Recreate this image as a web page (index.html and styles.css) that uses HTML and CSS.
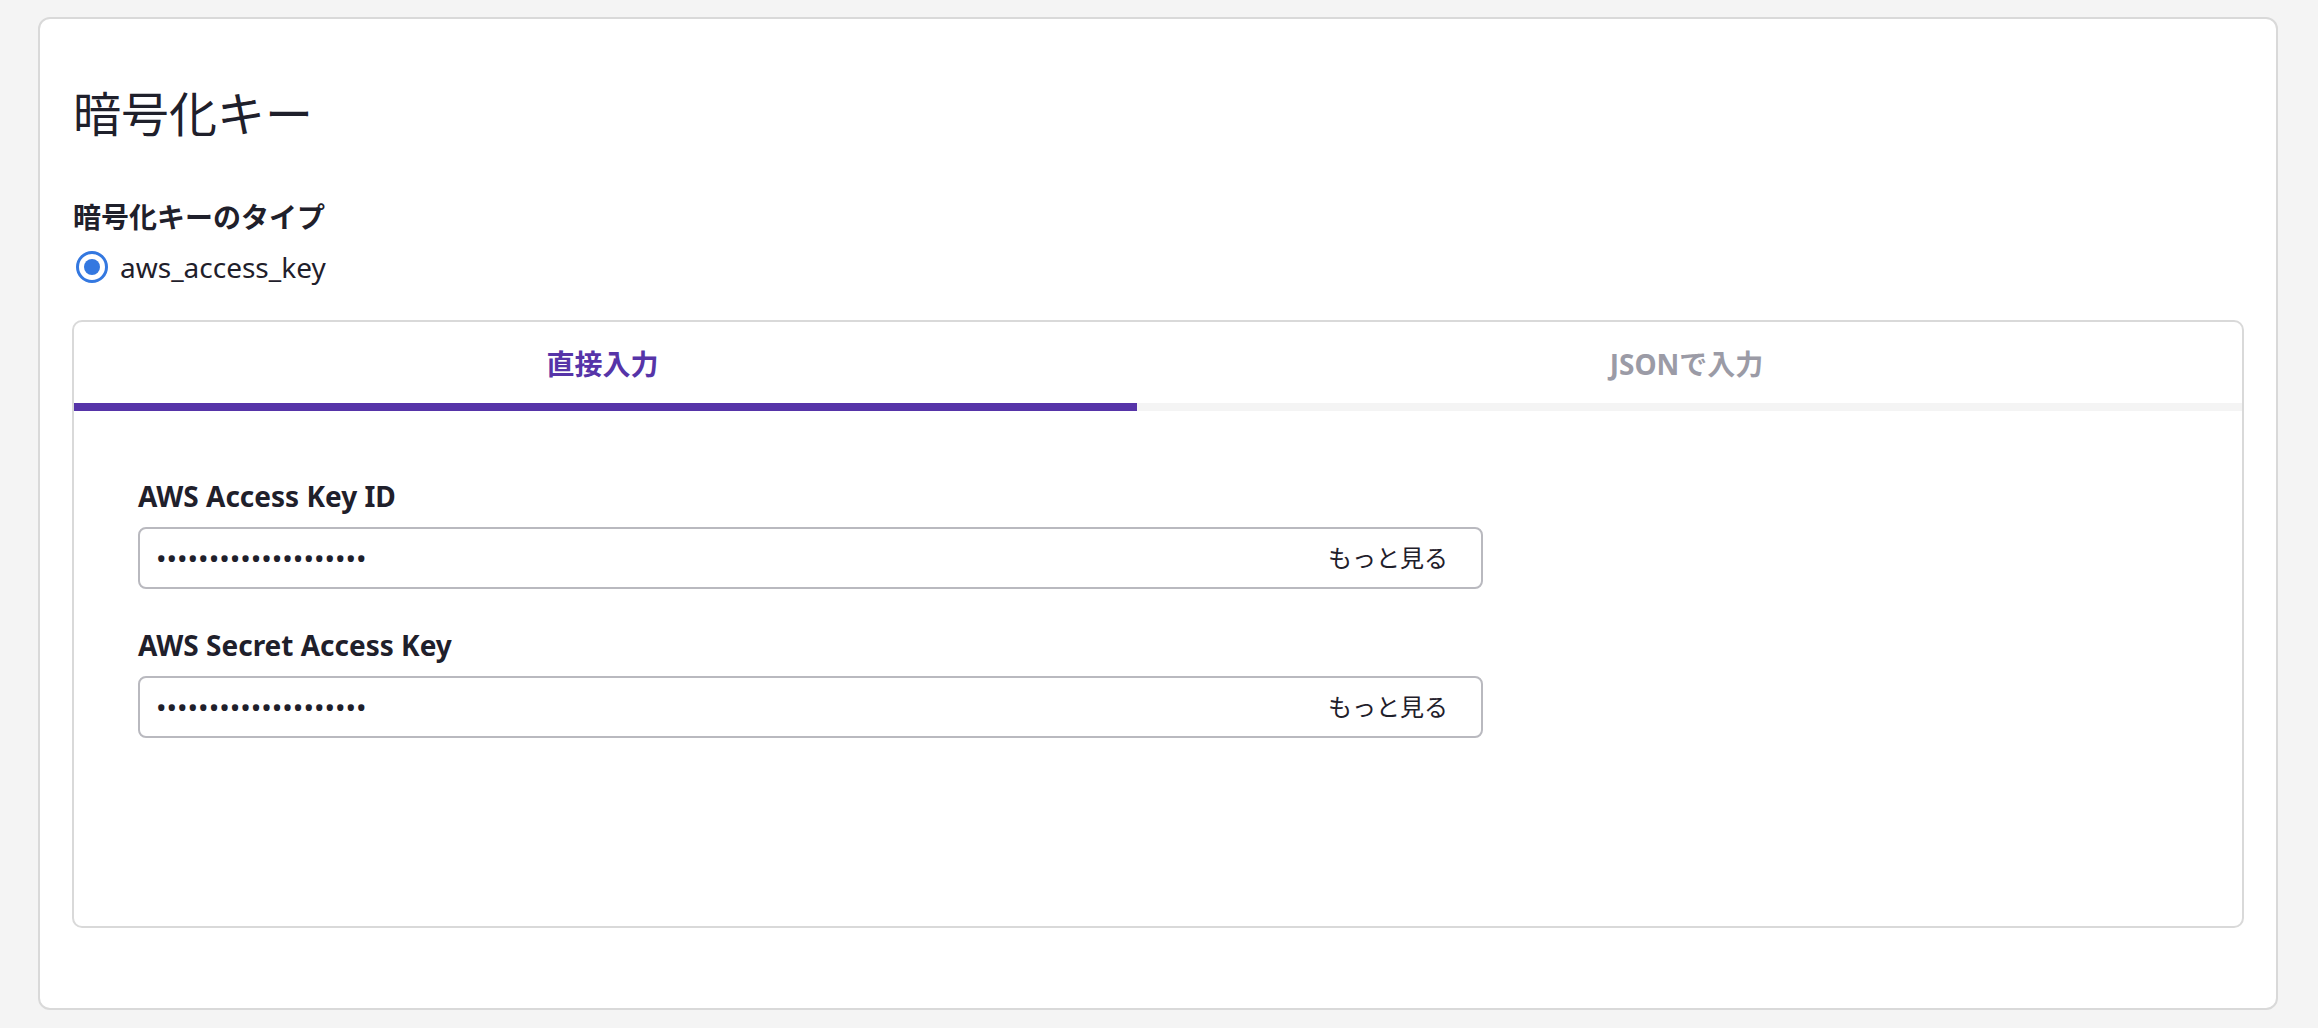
FILE: index.html
```html
<!DOCTYPE html>
<html lang="ja">
<head>
<meta charset="utf-8">
<title>暗号化キー</title>
<link rel="stylesheet" href="styles.css">
</head>
<body>
<div class="card">
  <h1 class="title">暗号化キー</h1>
  <div class="field-label">暗号化キーのタイプ</div>
  <div class="radio-row">
    <span class="radio"><span class="radio-dot"></span></span>
    <span class="radio-text">aws_access_key</span>
  </div>
  <div class="tabbox">
    <div class="tabs">
      <div class="tab tab-active">直接入力</div>
      <div class="tab tab-inactive">JSONで入力</div>
    </div>
    <div class="tab-body">
      <div class="form-group">
        <div class="input-label">AWS Access Key ID</div>
        <div class="input">
          <span class="dots">••••••••••••••••••••</span>
          <span class="more">もっと見る</span>
        </div>
      </div>
      <div class="form-group">
        <div class="input-label">AWS Secret Access Key</div>
        <div class="input">
          <span class="dots">••••••••••••••••••••</span>
          <span class="more">もっと見る</span>
        </div>
      </div>
    </div>
  </div>
</div>
</body>
</html>
```

FILE: styles.css
```css
html, body {
  margin: 0;
  padding: 0;
}
body {
  background: #f4f4f4;
  font-family: "Noto Sans", "Noto Sans CJK JP", sans-serif;
  color: #1f202b;
  padding: 17px 40px 0 38px;
}
.card {
  background: #ffffff;
  border: 2px solid #d9d9d9;
  border-radius: 12px;
  padding: 64px 32px 80px 32px;
}
.title {
  margin: 0;
  font-size: 48px;
  font-weight: 400;
  line-height: 62px;
  padding-left: 1px;
}
.field-label {
  margin-top: 52px;
  font-size: 28px;
  font-weight: 700;
  line-height: 40px;
  padding-left: 1px;
}
.radio-row {
  display: flex;
  align-items: center;
  gap: 12px;
  margin-top: 10px;
  height: 40px;
  padding-left: 4px;
}
.radio {
  width: 32px;
  height: 32px;
  box-sizing: border-box;
  border: 3px solid #3478e0;
  border-radius: 50%;
  display: flex;
  align-items: center;
  justify-content: center;
}
.radio-dot {
  width: 16px;
  height: 16px;
  border-radius: 50%;
  background: #3478e0;
}
.radio-text {
  font-size: 28px;
  line-height: 40px;
}
.tabbox {
  margin-top: 33px;
  border: 2px solid #d9d9d9;
  border-radius: 10px;
  overflow: hidden;
}
.tabs {
  display: grid;
  grid-template-columns: 1063px 1fr;
}
.tab {
  height: 81px;
  display: flex;
  align-items: center;
  justify-content: center;
  font-size: 28px;
  font-weight: 700;
  padding-right: 6px;
}
.tab-active {
  color: #5634a8;
  border-bottom: 8px solid #5634a8;
}
.tab-inactive {
  color: #9b9ba6;
  border-bottom: 8px solid #f4f4f4;
}
.tab-body {
  padding: 65px 64px 188px 64px;
}
.form-group {
  width: 1345px;
}
.form-group + .form-group {
  margin-top: 36px;
}
.input-label {
  font-size: 28px;
  font-weight: 700;
  line-height: 40px;
  margin-bottom: 11px;
}
.input {
  height: 62px;
  box-sizing: border-box;
  border: 2px solid #b9b9bf;
  border-radius: 8px;
  display: flex;
  align-items: center;
  justify-content: space-between;
  padding: 0 33px 0 16px;
}
.dots {
  font-size: 28px;
  line-height: 1;
  letter-spacing: 0;
}
.more {
  font-size: 24px;
  line-height: 1;
}
```
